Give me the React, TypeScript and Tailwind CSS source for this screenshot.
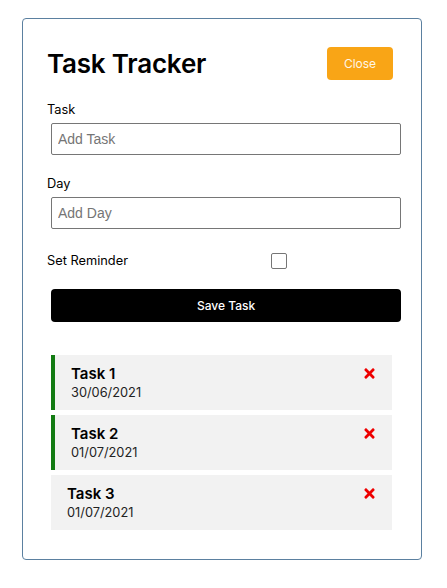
import React, { useState } from 'react';
import { FaTimes } from 'react-icons/fa';

interface Task {
    id: number;
    text: string;
    day: string;
    reminder: boolean;
}

const initialTasks: Task[] = [
    { id: 1, text: 'Task 1', day: '30/06/2021', reminder: true },
    { id: 2, text: 'Task 2', day: '01/07/2021', reminder: true },
    { id: 3, text: 'Task 3', day: '01/07/2021', reminder: false },
];

const App: React.FC = () => {
    const [tasks, setTasks] = useState(initialTasks);
    const [text, setText] = useState('');
    const [day, setDay] = useState('');
    const [reminder, setReminder] = useState(false);

    const deleteTask = (id: number) => {
        setTasks(current => current.filter(t => t.id !== id));
    };

    const toggleReminder = (id: number) => {
        setTasks(current => current.map(t => t.id === id ? { ...t, reminder: !t.reminder } : t));
    };

    return (
        <div className="min-h-screen bg-white pt-[18px] font-['Inter',sans-serif] text-black">
            <div className="ml-[22px] w-[400px] rounded-[4px] border border-[#5b80a0] px-6 pt-6 pb-[29px]">
                <header className="flex h-[41px] items-center justify-between">
                    <h1 className="text-[26px] font-semibold tracking-[-0.2px]">Task Tracker</h1>
                    <button className="mr-1 h-[33px] w-[66px] rounded-[4px] bg-[#f9a516] text-[12px] text-[#fff6e6]">
                        Close
                    </button>
                </header>

                <form className="mt-[17px] flex flex-col" onSubmit={e => e.preventDefault()}>
                    <label className="h-[18px] text-[12.8px] leading-[18px]">Task</label>
                    <input
                        type="text"
                        value={text}
                        onChange={e => setText(e.target.value)}
                        placeholder="Add Task"
                        className="mt-1 ml-1 h-[32px] w-[350px] rounded-[2px] border border-[#767676] px-[6px] font-['Liberation_Sans',sans-serif] text-[14px] placeholder:text-[#757575]"
                    />

                    <label className="mt-5 h-[18px] text-[12.8px] leading-[18px]">Day</label>
                    <input
                        type="text"
                        value={day}
                        onChange={e => setDay(e.target.value)}
                        placeholder="Add Day"
                        className="mt-1 ml-1 h-[32px] w-[350px] rounded-[2px] border border-[#767676] px-[6px] font-['Liberation_Sans',sans-serif] text-[14px] placeholder:text-[#757575]"
                    />

                    <div className="mt-5 flex h-[24px] items-center">
                        <label className="flex-1 text-[12.8px]">Set Reminder</label>
                        <div className="flex flex-[2] justify-center">
                            <input
                                type="checkbox"
                                checked={reminder}
                                onChange={e => setReminder(e.target.checked)}
                                className="mr-[2px] h-4 w-4 appearance-none rounded-[2px] border border-[#767676] bg-white"
                            />
                        </div>
                    </div>

                    <button
                        type="submit"
                        className="mt-4 ml-1 h-[33px] w-[350px] rounded-[4px] bg-black text-[12px] font-medium text-white"
                    >
                        Save Task
                    </button>
                </form>

                <div className="mt-[33px] flex flex-col gap-[5px]">
                    {tasks.map(task => (
                        <div
                            key={task.id}
                            onDoubleClick={() => toggleReminder(task.id)}
                            className={`ml-1 flex h-[55px] w-[341px] flex-col justify-center bg-[#f2f2f2] px-4 ${task.reminder ? 'border-l-4 border-[#137b13]' : ''}`}
                        >
                            <h3 className="flex items-center justify-between text-[15px] leading-[20px] font-semibold">
                                {task.text}
                                <FaTimes
                                    className="-mr-px cursor-pointer text-[15px] text-[#e00]"
                                    onClick={() => deleteTask(task.id)}
                                />
                            </h3>
                            <p className="text-[12.8px] leading-[18px] text-[#222]">{task.day}</p>
                        </div>
                    ))}
                </div>
            </div>
        </div>
    );
};

export default App;
